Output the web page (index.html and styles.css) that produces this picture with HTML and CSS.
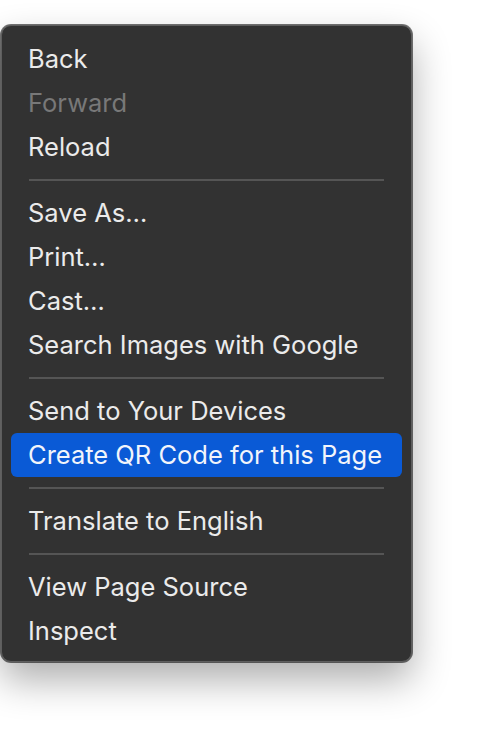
FILE: index.html
```html
<!DOCTYPE html>
<html>
<head>
<meta charset="utf-8">
<link rel="stylesheet" href="styles.css">
</head>
<body>
<div class="menu">
  <div class="item">Back</div>
  <div class="item disabled">Forward</div>
  <div class="item">Reload</div>
  <div class="sep"></div>
  <div class="item">Save As…</div>
  <div class="item">Print…</div>
  <div class="item">Cast…</div>
  <div class="item">Search Images with Google</div>
  <div class="sep"></div>
  <div class="item">Send to Your Devices</div>
  <div class="item active">Create QR Code for this Page</div>
  <div class="sep"></div>
  <div class="item">Translate to English</div>
  <div class="sep"></div>
  <div class="item">View Page Source</div>
  <div class="item">Inspect</div>
</div>
</body>
</html>
```
FILE: styles.css
```css
html, body {
  margin: 0;
  padding: 0;
  background: #ffffff;
}
body {
  font-family: Inter, "Liberation Sans", sans-serif;
  min-height: 746px;
}
.menu {
  margin: 25px 0 60px 1px;
  padding: 11px 9px 8px 9px;
  box-sizing: border-box;
  width: 411px;
  background: #323232;
  border: 1px solid #5e5e5e;
  border-radius: 10px;
  box-shadow: 0 0 0 1px rgba(0,0,0,0.55), 0 18px 38px rgba(0,0,0,0.32);
}
.item {
  height: 44px;
  line-height: 44px;
  padding-left: 17px;
  font-size: 25.5px;
  color: #ebebeb;
  border-radius: 6px;
  white-space: nowrap;
}
.item.disabled {
  color: #787878;
}
.item.active {
  background: #0a5ad6;
  color: #f2f5fb;
}
.sep {
  height: 22px;
  display: flex;
  align-items: center;
  padding: 0 18px;
}
.sep::before {
  content: "";
  display: block;
  width: 100%;
  height: 2px;
  background: #555555;
}
```
